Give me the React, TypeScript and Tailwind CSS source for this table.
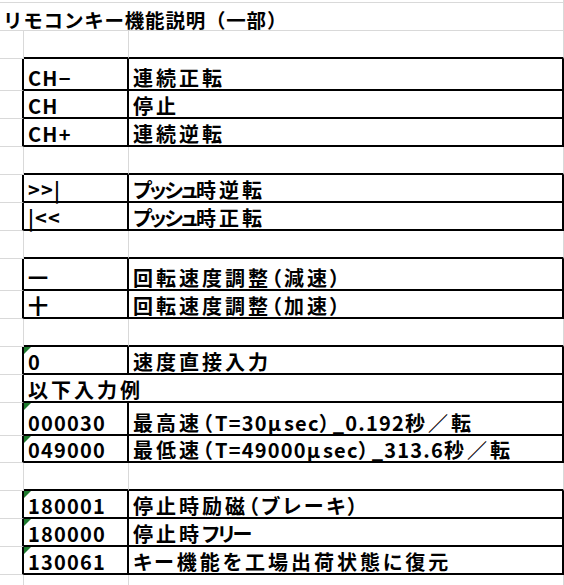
import type { ReactNode } from 'react'

type Line = 'black' | 'gray' | 'none'

type Row =
  | { kind: 'spacer'; h: string }
  | { kind: 'title'; h: string; text: string }
  | { kind: 'blank'; h: string; next: Line }
  | { kind: 'item'; h: string; code: string; text: string; flag?: boolean }
  | { kind: 'span'; h: string; text: string }

const rows: Row[] = [
  { kind: 'spacer', h: 'h-[3px]' },
  { kind: 'title', h: 'h-[28px]', text: 'リモコンキー機能説明（一部）' },
  { kind: 'blank', h: 'h-[28px]', next: 'black' },
  { kind: 'item', h: 'h-[32px]', code: 'CH−', text: '連続正転' },
  { kind: 'item', h: 'h-[28px]', code: 'CH', text: '停止' },
  { kind: 'item', h: 'h-[28px]', code: 'CH+', text: '連続逆転' },
  { kind: 'blank', h: 'h-[28px]', next: 'black' },
  { kind: 'item', h: 'h-[28px]', code: '>>|', text: 'プッシュ時逆転' },
  { kind: 'item', h: 'h-[28px]', code: '|<<', text: 'プッシュ時正転' },
  { kind: 'blank', h: 'h-[28px]', next: 'black' },
  { kind: 'item', h: 'h-[32px]', code: '一', text: '回転速度調整（減速）' },
  { kind: 'item', h: 'h-[28px]', code: '十', text: '回転速度調整（加速）' },
  { kind: 'blank', h: 'h-[28px]', next: 'black' },
  { kind: 'item', h: 'h-[28px]', code: '0', text: '速度直接入力', flag: true },
  { kind: 'span', h: 'h-[28px]', text: '以下入力例' },
  { kind: 'item', h: 'h-[33px]', code: '000030', text: '最高速（T=30μsec）_0.192秒／転', flag: true },
  { kind: 'item', h: 'h-[27px]', code: '049000', text: '最低速（T=49000μsec）_313.6秒／転', flag: true },
  { kind: 'blank', h: 'h-[28px]', next: 'black' },
  { kind: 'item', h: 'h-[28px]', code: '180001', text: '停止時励磁（ブレーキ）', flag: true },
  { kind: 'item', h: 'h-[28px]', code: '180000', text: '停止時フリー', flag: true },
  { kind: 'item', h: 'h-[28px]', code: '130061', text: 'キー機能を工場出荷状態に復元', flag: true },
  { kind: 'blank', h: 'h-[10px]', next: 'none' },
]

const rightCls: Record<Line, string> = {
  black: 'border-r-2 border-r-black',
  gray: 'border-r border-r-[#d9d9d9]',
  none: '',
}

const bottomCls: Record<Line, string> = {
  black: 'border-b-2 border-b-black',
  gray: 'border-b border-b-[#d9d9d9]',
  none: '',
}

// Splits text so half-width runs and the narrow katakana get tighter tracking,
// roughly imitating the proportional widths of MS PGothic.
function Runs({ text }: { text: string }) {
  const parts = text.match(/[\x20-\x7E]+|[プッシュフリ]+|[^\x20-\x7Eプッシュフリ]+/g) ?? []
  return (
    <>
      {parts.map((p, i) => {
        if (/[\x20-\x7E]/.test(p[0])) {
          return (
            <span key={i} className="tracking-[1.2px]">
              {p}
            </span>
          )
        }
        if (/[プッシュフリ]/.test(p[0])) {
          return (
            <span key={i} className="tracking-[-2px] [font-feature-settings:'palt']">
              {p}
            </span>
          )
        }
        return (
          <span key={i} className="tracking-[3px] [font-feature-settings:'palt']">
            {p}
          </span>
        )
      })}
    </>
  )
}

// One spreadsheet cell; text sits on the bottom like Excel's default alignment.
function Cell({
  w,
  right,
  bottom,
  flag,
  children,
}: {
  w: string
  right: Line
  bottom: Line
  flag?: boolean
  children?: string
}) {
  return (
    <div
      className={`relative flex h-full shrink-0 items-end whitespace-nowrap pl-[4px] ${w} ${rightCls[right]} ${bottomCls[bottom]}`}
    >
      {flag && (
        <svg className="absolute left-0 top-0" width="7" height="7" viewBox="0 0 7 7">
          <polygon points="0,0 7,0 0,7" fill="#1f7a2e" />
        </svg>
      )}
      {children != null && (
        <span className="pb-[1px] text-[20px] font-bold leading-none text-black">
          <Runs text={children} />
        </span>
      )}
    </div>
  )
}

function RowBox({ h, children }: { h: string; children: ReactNode }) {
  return <div className={`flex ${h}`}>{children}</div>
}

function SheetRow({ row }: { row: Row }) {
  if (row.kind === 'spacer') {
    return (
      <RowBox h={row.h}>
        <Cell w="w-[564px]" right="gray" bottom="gray" />
      </RowBox>
    )
  }
  if (row.kind === 'title') {
    return (
      <RowBox h={row.h}>
        <div className="flex h-full w-[564px] items-end border-r border-b border-r-[#d9d9d9] border-b-[#d9d9d9] pl-[3px]">
          <span className="pb-[1px] text-[19.5px] font-bold leading-none tracking-[0.8px] text-black">
            {row.text}
          </span>
        </div>
      </RowBox>
    )
  }
  if (row.kind === 'blank') {
    return (
      <RowBox h={row.h}>
        <Cell w="w-[24px]" right="gray" bottom={row.next === 'none' ? 'none' : 'gray'} />
        <Cell w="w-[105px]" right="gray" bottom={row.next} />
        <Cell w="w-[435px]" right="gray" bottom={row.next} />
      </RowBox>
    )
  }
  if (row.kind === 'span') {
    return (
      <RowBox h={row.h}>
        <Cell w="w-[24px]" right="black" bottom="gray" />
        <Cell w="w-[540px]" right="black" bottom="black">
          {row.text}
        </Cell>
      </RowBox>
    )
  }
  return (
    <RowBox h={row.h}>
      <Cell w="w-[24px]" right="black" bottom="gray" />
      <Cell w="w-[105px]" right="black" bottom="black" flag={row.flag}>
        {row.code}
      </Cell>
      <Cell w="w-[435px]" right="black" bottom="black">
        {row.text}
      </Cell>
    </RowBox>
  )
}

export default function App() {
  return (
    <div className="h-[585px] w-[564px] overflow-hidden bg-white font-['Noto_Sans_CJK_JP','Noto_Sans',sans-serif]">
      {rows.map((r, i) => (
        <SheetRow key={i} row={r} />
      ))}
    </div>
  )
}
